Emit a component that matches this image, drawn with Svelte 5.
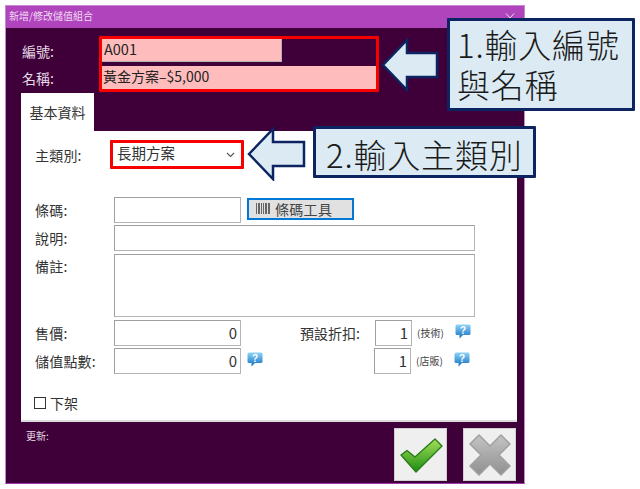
<script lang="ts">
	// Dialog for adding/editing a stored-value bundle, with tutorial callouts on top
	const font = 'Noto Sans CJK TC';
</script>

{#snippet help()}
	<svg class="help" width="16" height="15" viewBox="0 0 16 15" aria-hidden="true">
		<defs>
			<linearGradient id="helpFill" x1="0" y1="0" x2="0" y2="1">
				<stop offset="0" stop-color="#8fd3f7" />
				<stop offset="1" stop-color="#0f6fc0" />
			</linearGradient>
		</defs>
		<path d="M2 0.5H14a1.5 1.5 0 0 1 1.5 1.5V9.5A1.5 1.5 0 0 1 14 11H8L4.5 14.5V11H2A1.5 1.5 0 0 1 .5 9.5V2A1.5 1.5 0 0 1 2 .5Z" fill="url(#helpFill)" />
		<text x="8" y="9.5" text-anchor="middle" font-size="10" font-weight="700" font-family="Liberation Sans" fill="#fff">?</text>
	</svg>
{/snippet}

<div class="page" style:font-family="'{font}', sans-serif">
	<div class="window">
		<header class="titlebar">
			<span>新增/修改儲值組合</span>
			<svg width="10" height="6" viewBox="0 0 10 6" aria-hidden="true"><path d="M1 0.5L5 5L9 0.5" fill="none" stroke="#eedcf0" stroke-width="1" /></svg>
		</header>

		<div class="content">
			<div class="head-row">
				<label class="head-label" for="code">編號:</label>
				<input id="code" class="pink short" value="A001" readonly />
			</div>
			<div class="head-row">
				<label class="head-label" for="name">名稱:</label>
				<input id="name" class="pink long" value="黃金方案–$5,000" readonly />
			</div>

			<div class="tab">基本資料</div>
			<div class="panel">
				<div class="row select-row">
					<span class="lbl">主類別:</span>
					<div class="select">
						<span class="select-text">長期方案</span>
						<svg width="9" height="6" viewBox="0 0 9 6" aria-hidden="true"><path d="M1 1L4.5 4.5L8 1" fill="none" stroke="#555" stroke-width="1.1" /></svg>
					</div>
				</div>

				<div class="row barcode-row">
					<span class="lbl">條碼:</span>
					<input class="field mid" readonly />
					<button type="button" class="tool">
						<svg width="14" height="11" viewBox="0 0 14 11" aria-hidden="true">
							<path d="M0 0h1v11H0zM2 0h2v11H2zM5 0h1v11H5zM7 0h1v11H7zM9 0h2v11H9zM12 0h2v11h-2z" fill="#666" />
						</svg>
						條碼工具
					</button>
				</div>
				<div class="row">
					<span class="lbl">說明:</span>
					<input class="field wide" readonly />
				</div>
				<div class="row memo-row">
					<span class="lbl">備註:</span>
					<textarea class="field wide memo" readonly></textarea>
				</div>

				<div class="row price-row">
					<span class="lbl">售價:</span>
					<input class="field mid num" value="0" readonly />
					<span class="discount-lbl">預設折扣:</span>
					<input class="field small num" value="1" readonly />
					<span class="hint">(技術)</span>
					{@render help()}
				</div>
				<div class="row price-row">
					<span class="lbl">儲值點數:</span>
					<input class="field mid num" value="0" readonly />
					<span class="inline-help">{@render help()}</span>
					<input class="field small num second" value="1" readonly />
					<span class="hint">(店販)</span>
					{@render help()}
				</div>

				<div class="check-row">
					<span class="checkbox"></span>
					<span>下架</span>
				</div>
			</div>

			<div class="footer">
				<span class="updated">更新:</span>
				<div class="actions">
					<button type="button" class="square" aria-label="確定">
						<svg width="44" height="36" viewBox="0 0 44 36" aria-hidden="true">
							<defs>
								<linearGradient id="okFill" x1="0" y1="0" x2="0" y2="1">
									<stop offset="0" stop-color="#a4e05a" />
									<stop offset="1" stop-color="#1d8c12" />
								</linearGradient>
							</defs>
							<path d="M2 18L8 13.5L16 20L36 2L43 9L17 35Z" fill="url(#okFill)" stroke="#2a7d1a" stroke-width="1.4" stroke-linejoin="round" />
						</svg>
					</button>
					<button type="button" class="square" aria-label="取消">
						<svg width="44" height="44" viewBox="0 0 44 44" aria-hidden="true">
							<defs>
								<linearGradient id="noFill" x1="0" y1="0" x2="0" y2="1">
									<stop offset="0" stop-color="#c4c4c4" />
									<stop offset="1" stop-color="#8f8f8f" />
								</linearGradient>
							</defs>
							<path d="M11 2L22 13L33 2L42 11L31 22L42 33L33 42L22 31L11 42L2 33L13 22L2 11Z" fill="url(#noFill)" stroke="#a0a0a0" stroke-width="1.5" stroke-linejoin="round" />
						</svg>
					</button>
				</div>
			</div>
		</div>
	</div>

	<!-- tutorial annotations drawn over the screenshot -->
	<div class="mark mark-head"></div>
	<div class="mark mark-select"></div>

	<svg class="arrow arrow-1" width="58" height="54" viewBox="0 0 58 54" aria-hidden="true">
		<path d="M2 27L26 2V15H56V39H26V52Z" fill="#dbeaf3" stroke="#0c2461" stroke-width="2.5" />
	</svg>
	<svg class="arrow arrow-2" width="59" height="54" viewBox="0 0 59 54" aria-hidden="true">
		<path d="M2 27L26 2V15H57V39H26V52Z" fill="#dbeaf3" stroke="#0c2461" stroke-width="2.5" />
	</svg>

	<div class="callout callout-1">1.輸入編號<br />與名稱</div>
	<div class="callout callout-2">2.輸入主類別</div>
</div>

<style>
	:global(body) {
		margin: 0;
		background: #fff;
	}

	.page {
		position: relative;
		width: 640px;
		height: 489px;
		overflow: hidden;
		padding: 5px 0 0 5px;
		box-sizing: border-box;
		color: #333;
		font-size: 14px;
	}

	.window {
		width: 520px;
		height: 479px;
		box-sizing: border-box;
		border: 1px solid #c78ad0;
		border-bottom-color: #a038ae;
		background: #3f0039;
		display: flex;
		flex-direction: column;
	}

	.titlebar {
		height: 22px;
		box-sizing: border-box;
		flex-shrink: 0;
		background: #b044bd;
		color: #f0dcf2;
		font-size: 10px;
		display: flex;
		align-items: center;
		justify-content: space-between;
		padding: 0 9px 3px 3px;
	}

	.content {
		flex: 1;
		display: flex;
		flex-direction: column;
		padding: 11px 8px 0 15px;
		min-height: 0;
	}

	.head-row {
		display: flex;
		align-items: center;
		height: 23px;
		margin-bottom: 4px;
	}

	.head-label {
		width: 80px;
		padding-left: 1px;
		color: #e6dce5;
		box-sizing: border-box;
		position: relative;
	}

	input,
	textarea {
		font: inherit;
		color: #333;
		box-sizing: border-box;
		margin: 0;
		outline: none;
		resize: none;
		display: block;
	}

	.pink {
		height: 23px;
		background: #ffbcbc;
		border: 0;
		padding: 0 0 3px 2px;
		color: #222;
	}

	.short {
		width: 181px;
		border-right: 1px solid #b8b0b0;
		border-bottom: 1px solid #b8b0b0;
		font-size: 14.5px;
		padding-left: 3px;
	}

	.long {
		width: 275px;
	}

	.tab {
		width: 73px;
		height: 38px;
		box-sizing: border-box;
		background: #fff;
		display: flex;
		align-items: center;
		justify-content: center;
	}

	.panel {
		width: 496px;
		height: 291px;
		box-sizing: border-box;
		background: #fff;
		border-bottom: 2px solid #dcdcdc;
		padding: 12px 0 0 14px;
		display: flex;
		flex-direction: column;
		gap: 2px;
	}

	.row {
		display: flex;
		align-items: center;
		height: 26px;
	}

	.lbl {
		width: 79px;
		flex-shrink: 0;
		letter-spacing: 0.2px;
	}

	.select-row {
		height: 23px;
	}

	.select {
		width: 129px;
		height: 23px;
		box-sizing: border-box;
		padding: 0 6px 0 5px;
		margin-left: -2px;
		display: flex;
		align-items: center;
		justify-content: space-between;
	}

	.select-text {
		font-size: 14.5px;
		position: relative;
		top: -2px;
	}

	.barcode-row {
		margin-top: 29px;
	}

	.field {
		height: 26px;
		background: #fff;
		border: 1px solid #a0a0a0;
		border-right-color: #b4b4b4;
		border-bottom-color: #b4b4b4;
		padding: 0 3px;
	}

	.mid {
		width: 127px;
	}

	.wide {
		width: 361px;
	}

	.small {
		width: 37px;
	}

	.second {
		margin-left: 104px;
	}

	.num {
		text-align: right;
		font-size: 15px;
		padding-bottom: 2px;
	}

	.tool {
		margin-left: 6px;
		width: 107px;
		height: 22px;
		box-sizing: border-box;
		border: 2px solid #0078d7;
		background: #e1e1e1;
		color: #444;
		font: inherit;
		letter-spacing: 0.3px;
		display: flex;
		align-items: center;
		gap: 5px;
		padding: 0 0 0 7px;
		margin-top: -3px;
	}

	.memo-row {
		height: 63px;
		margin-top: 1px;
		align-items: flex-start;
	}

	.memo-row .lbl {
		margin-top: 2px;
	}

	.memo {
		height: 63px;
	}

	.price-row {
		margin-top: 1px;
		margin-bottom: -1px;
	}

	.discount-lbl {
		width: 75px;
		margin-left: 59px;
		flex-shrink: 0;
	}

	.hint {
		font-size: 10px;
		color: #444;
		margin-left: 5px;
		width: 38px;
		flex-shrink: 0;
		position: relative;
		top: -1px;
	}

	.help {
		display: block;
		flex-shrink: 0;
		position: relative;
		top: -2px;
	}

	.inline-help {
		margin-left: 6px;
		width: 16px;
		margin-right: -16px;
		flex-shrink: 0;
	}

	.inline-help + .second {
		margin-left: 127px;
	}

	.check-row {
		margin-top: 18px;
		display: flex;
		align-items: center;
		gap: 4px;
		font-size: 14px;
		margin-left: -1px;
	}

	.checkbox {
		width: 12px;
		height: 12px;
		box-sizing: border-box;
		border: 1px solid #333;
		background: #fff;
	}

	.footer {
		flex: 1;
		display: flex;
		justify-content: space-between;
		align-items: flex-start;
		padding-top: 6px;
	}

	.updated {
		font-size: 10px;
		color: #e6dce5;
		margin-left: 5px;
	}

	.actions {
		display: flex;
		gap: 16px;
	}

	.square {
		width: 53px;
		height: 53px;
		padding: 0;
		box-sizing: border-box;
		background: #efefef;
		border: 1px solid #cfcfcf;
		display: flex;
		align-items: center;
		justify-content: center;
	}

	.mark {
		position: absolute;
		box-sizing: border-box;
		border: 3px solid #f60000;
		border-radius: 1px;
	}

	.mark-head {
		left: 99px;
		top: 36px;
		width: 280px;
		height: 56px;
	}

	.mark-select {
		left: 110px;
		top: 140px;
		width: 134px;
		height: 29px;
	}

	.arrow {
		position: absolute;
		display: block;
	}

	.arrow-1 {
		left: 381px;
		top: 38px;
	}

	.arrow-2 {
		left: 247px;
		top: 127px;
	}

	.callout {
		position: absolute;
		box-sizing: border-box;
		background: #dbeaf3;
		border: 3px solid #0c2461;
		border-radius: 1px;
		color: #1a1a1a;
		font-size: 33px;
		font-weight: 300;
		line-height: 40px;
		white-space: nowrap;
		letter-spacing: 0.8px;
	}

	.callout-1 {
		left: 447px;
		top: 18px;
		width: 188px;
		height: 93px;
		padding: 3px 0 0 7px;
	}

	.callout-2 {
		left: 313px;
		top: 126px;
		width: 223px;
		height: 52px;
		padding: 5px 0 0 10px;
	}
</style>
